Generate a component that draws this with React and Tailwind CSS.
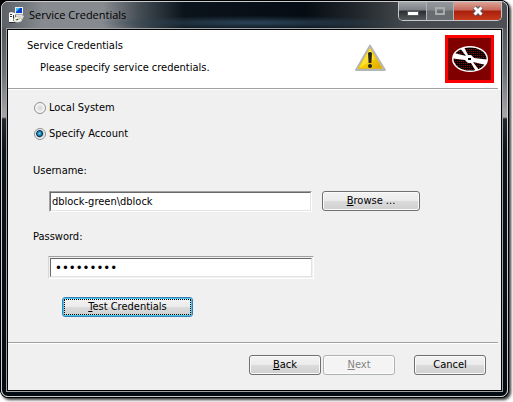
import React from "react";

const buttonShape = "flex h-5 items-center justify-center rounded-[3px] border";
const buttonNormal =
  "border-[#707070] bg-[linear-gradient(#f3f3f3_0%,#ebebeb_49%,#dcdcdc_50%,#cfcfcf_100%)] text-black shadow-[inset_0_0_0_1px_#fafafa]";
const buttonFocused =
  "border-[#3c7fb1] bg-[linear-gradient(#f3f3f3_0%,#ebebeb_49%,#dcdcdc_50%,#cfcfcf_100%)] text-black shadow-[inset_0_0_0_1px_#46c8f0]";
const buttonDisabled = "border-[#adb2b5] bg-[#f4f4f4] text-[#838383] shadow-[inset_0_0_0_1px_#fcfcfc]";

function WarningIcon() {
  return (
    <svg width="32" height="28" viewBox="0 0 32 28" role="img" aria-label="Warning">
      <defs>
        <linearGradient id="warn" x1="0" y1="0" x2="1" y2="1">
          <stop offset="0" stopColor="#ffee60" />
          <stop offset="0.45" stopColor="#fbd800" />
          <stop offset="1" stopColor="#dfa000" />
        </linearGradient>
      </defs>
      <path d="M15 1.500 L30 26 H1 Z" fill="#d0d3d6" stroke="#b2b6bb" strokeWidth="1.800" strokeLinejoin="round" />
      <path d="M15 4 L27.500 24.500 H3 Z" fill="url(#warn)" stroke="#e0b400" strokeWidth="0.600" />
      <path d="M15 5 L4.500 23.500 L20 15 Z" fill="#fff8a0" opacity="0.350" />
      <path d="M13 9 Q15 7 17 9 L16.400 19 H13.600 Z" fill="#25231c" />
      <circle cx="15" cy="22" r="2" fill="#25231c" />
    </svg>
  );
}

function DiscIcon() {
  return (
    <svg width="49" height="48" viewBox="0 0 49 48" role="img" aria-label="Installation disc">
      <defs>
        <pattern id="dots" width="2" height="2" patternUnits="userSpaceOnUse">
          <rect width="2" height="2" fill="#000" />
          <rect width="1" height="1" fill="#900000" />
        </pattern>
        <clipPath id="disc">
          <ellipse cx="25" cy="24" rx="16.500" ry="11.500" />
        </clipPath>
      </defs>
      <rect width="49" height="48" fill="#ff0000" />
      <rect x="3" y="3" width="43" height="42" fill="#800000" />
      <ellipse cx="25" cy="24" rx="18" ry="13" fill="#fff" />
      <g clipPath="url(#disc)" fill="url(#dots)">
        <path d="M17 8 H46 V25 L29 23 L26 20 L23 20 Z" />
        <path d="M33 40 H4 V23 L20 25 L23 28 L26 28 Z" />
        <path d="M9 18 L15 13 L21 21 Z" />
        <path d="M41 30 L34 35 L28 27 Z" />
      </g>
      <ellipse cx="24.500" cy="24" rx="4" ry="3" fill="#fff" />
      <rect x="23" y="23" width="3" height="2" fill="#000" />
    </svg>
  );
}

function InstallerIcon() {
  return (
    <svg width="16" height="16" viewBox="0 0 16 16" aria-hidden="true">
      <path d="M6 0 H15 V8 H6 Z" fill="#e8ecf0" />
      <path d="M14.500 0 V8 H6" fill="none" stroke="#777" />
      <rect x="7" y="1" width="6" height="5" fill="#0a3fd0" />
      <path d="M7 1 H11 L7 5 Z" fill="#38c4f4" />
      <path d="M7 8 H13 L15 9 L12 15 H7 Z" fill="#deded4" />
      <path d="M0 6 L2 5 L6 6 V15 H0 Z" fill="#f8f8f4" />
      <path d="M1 7.500 H3 M1 9.500 H3 M4.500 8 V14 M0 15.500 H6" stroke="#333" />
      <ellipse cx="8.500" cy="12.500" rx="4" ry="2.800" fill="#fff" stroke="#999" strokeWidth="0.500" />
      <path d="M6 12 H8 V14 Z" fill="#5ab050" />
      <path d="M9 11 L12 11 L10 13 Z" fill="#d8c860" />
      <circle cx="8.500" cy="12.500" r="0.800" fill="#333" />
    </svg>
  );
}

function WindowControls() {
  return (
    <div className="flex h-[19px] overflow-hidden rounded-b-[5px] border border-t-0 border-[#c6c9cb]">
      <button
        aria-label="Minimize"
        className="flex w-7 items-center justify-center border-r border-[#b0b4b7] bg-[linear-gradient(#a2a6aa_0%,#7d8185_45%,#2b2e31_50%,#55585b_100%)]"
      >
        <svg width="12" height="10" viewBox="0 0 12 10" aria-hidden="true">
          <rect x="0.500" y="5.500" width="11" height="4" fill="#fff" stroke="#555a60" />
        </svg>
      </button>
      <button
        aria-label="Maximize"
        disabled
        className="flex w-[27px] items-center justify-center border-r border-[#b0b4b7] bg-[linear-gradient(#94989c_0%,#85888b_45%,#686b6e_50%,#6b6e71_100%)]"
      >
        <svg width="12" height="10" viewBox="0 0 12 10" aria-hidden="true">
          <rect x="2" y="2" width="8" height="6" fill="none" stroke="#a9acaf" strokeWidth="2" />
        </svg>
      </button>
      <button
        aria-label="Close"
        className="flex w-[47px] items-center justify-center bg-[linear-gradient(#dba397_0%,#c8685a_45%,#a91f0c_50%,#c63a1c_100%)]"
      >
        <svg width="14" height="12" viewBox="0 0 14 12" aria-hidden="true">
          <path d="M3.500 2.500 L10.500 9.500 M10.500 2.500 L3.500 9.500" stroke="#55555f" strokeWidth="5" />
          <path d="M3.500 2.500 L10.500 9.500 M10.500 2.500 L3.500 9.500" stroke="#fff" strokeWidth="3" />
        </svg>
      </button>
    </div>
  );
}

function Radio({ label, defaultChecked }) {
  return (
    <label className="flex h-4 items-center gap-[3px]">
      <input
        type="radio"
        name="account"
        defaultChecked={defaultChecked}
        className="size-3 appearance-none rounded-full border border-[#8e8f8f] bg-[radial-gradient(circle,#d2d5d8_0%,#e9eaeb_45%,#f6f6f6_60%)] shadow-[inset_0_0_0_1px_#f6f6f6] checked:bg-[radial-gradient(circle_at_45%_45%,#6fd4f5_0px,#167fae_2px,#0b2c4a_3px,#b8c4cc_4px,#f4f4f4_5px)]"
      />
      {label}
    </label>
  );
}

export default function App() {
  return (
    <div className="h-screen overflow-hidden bg-white pt-px pr-[5px] pb-[5px] pl-px font-['DejaVu_Sans_Condensed','DejaVu_Sans',sans-serif] text-[11px] leading-4 text-black">
      <div className="flex h-full flex-col overflow-hidden rounded-[7px] border border-[#c9cdd0] bg-[linear-gradient(#4a4f53_0px,#55595e_30px,#6c7278_70px,#a9a7a8_115px,#20272d_117px,#0d151c_150px,#050b12_100%)] shadow-[0_0_0_1px_#000,-4px_-4px_0_0_#000,2px_2px_3px_1px_#333]">
        <header className="flex h-[26px] items-start justify-between bg-[radial-gradient(ellipse_160px_7px_at_50%_80%,#2b4458_0%,transparent_100%),linear-gradient(90deg,#5a6066_0%,#878b90_8%,#878b90_20%,#474f56_27%,#0c141b_36%,#050c13_60%,#20262b_70%,#45494d_80%,#4c5054_100%)] pr-[5px] pl-[7px]">
          <h1 className="flex items-center gap-1 pt-[5px] font-['Open_Sans',sans-serif]">
            <InstallerIcon />
            Service Credentials
          </h1>
          <WindowControls />
        </header>
        <main className="mx-1 mb-1 flex flex-1 flex-col border border-[#a0a2a4] bg-black p-px">
          <section className="bg-white">
            <div className="flex h-[58px] pt-[5px] pr-[7px] pl-[19px]">
              <div className="flex-1 pt-[3px]">
                <h2>Service Credentials</h2>
                <p className="pt-1.5 pl-[13px]">Please specify service credentials.</p>
              </div>
              <div className="pt-[9px] pr-[58px]">
                <WarningIcon />
              </div>
              <DiscIcon />
            </div>
            <hr className="mr-[3px] mb-px border-[#a0a0a0]" />
          </section>
          <form
            className="flex flex-1 flex-col bg-[#f0f0f0]"
            onSubmit={(event) => event.preventDefault()}
          >
            <fieldset className="flex flex-col items-start gap-2.5 pt-2.5 pl-[26px]">
              <Radio label="Local System" />
              <Radio label="Specify Account" defaultChecked />
            </fieldset>
            <div className="flex flex-col items-start pt-[21px] pl-[25px]">
              <label htmlFor="username">Username:</label>
              <div className="flex gap-2.5 pt-3 pl-4">
                <div className="border border-t-[#a0a0a0] border-r-white border-b-white border-l-[#a0a0a0]">
                  <input
                    id="username"
                    type="text"
                    defaultValue="dblock-green\dblock"
                    className="block h-[19px] w-[261px] border border-t-[#696969] border-r-[#e3e3e3] border-b-[#e3e3e3] border-l-[#696969] bg-white pl-px outline-none"
                  />
                </div>
                <button type="button" className={`${buttonShape} ${buttonNormal} w-[98px]`}>
                  <span><u>B</u>rowse ...</span>
                </button>
              </div>
              <label htmlFor="password" className="mt-[17px]">Password:</label>
              <div className="pt-[11px] pl-[15px]">
                <div className="border border-t-[#a0a0a0] border-r-white border-b-white border-l-[#d8d8d8] p-px">
                  <input
                    id="password"
                    type="password"
                    defaultValue="dblock123"
                    className="block h-[19px] w-[262px] border border-t-[#696969] border-r-[#e3e3e3] border-b-[#e3e3e3] border-l-[#696969] bg-white pl-1 text-[13px] outline-none"
                  />
                </div>
              </div>
              <div className="pt-[18px] pl-[29px]">
                <button
                  type="button"
                  className={`${buttonShape} ${buttonFocused} w-[131px] outline-1 -outline-offset-3 outline-dotted outline-black`}
                >
                  <span><u>T</u>est Credentials</span>
                </button>
              </div>
            </div>
            <footer className="mt-auto">
              <hr className="mr-[3px] border-[#a0a0a0]" />
              <hr className="mr-[3px] border-white" />
              <div className="flex justify-end pt-[11px] pr-[15px] pb-[15px]">
                <button type="button" className={`${buttonShape} ${buttonNormal} mr-0.5 w-[72px]`}>
                  <span><u>B</u>ack</span>
                </button>
                <button type="button" disabled className={`${buttonShape} ${buttonDisabled} mr-[19px] w-[72px]`}>
                  <span><u>N</u>ext</span>
                </button>
                <button type="button" className={`${buttonShape} ${buttonNormal} w-[72px]`}>
                  Cancel
                </button>
              </div>
            </footer>
          </form>
        </main>
      </div>
    </div>
  );
}
